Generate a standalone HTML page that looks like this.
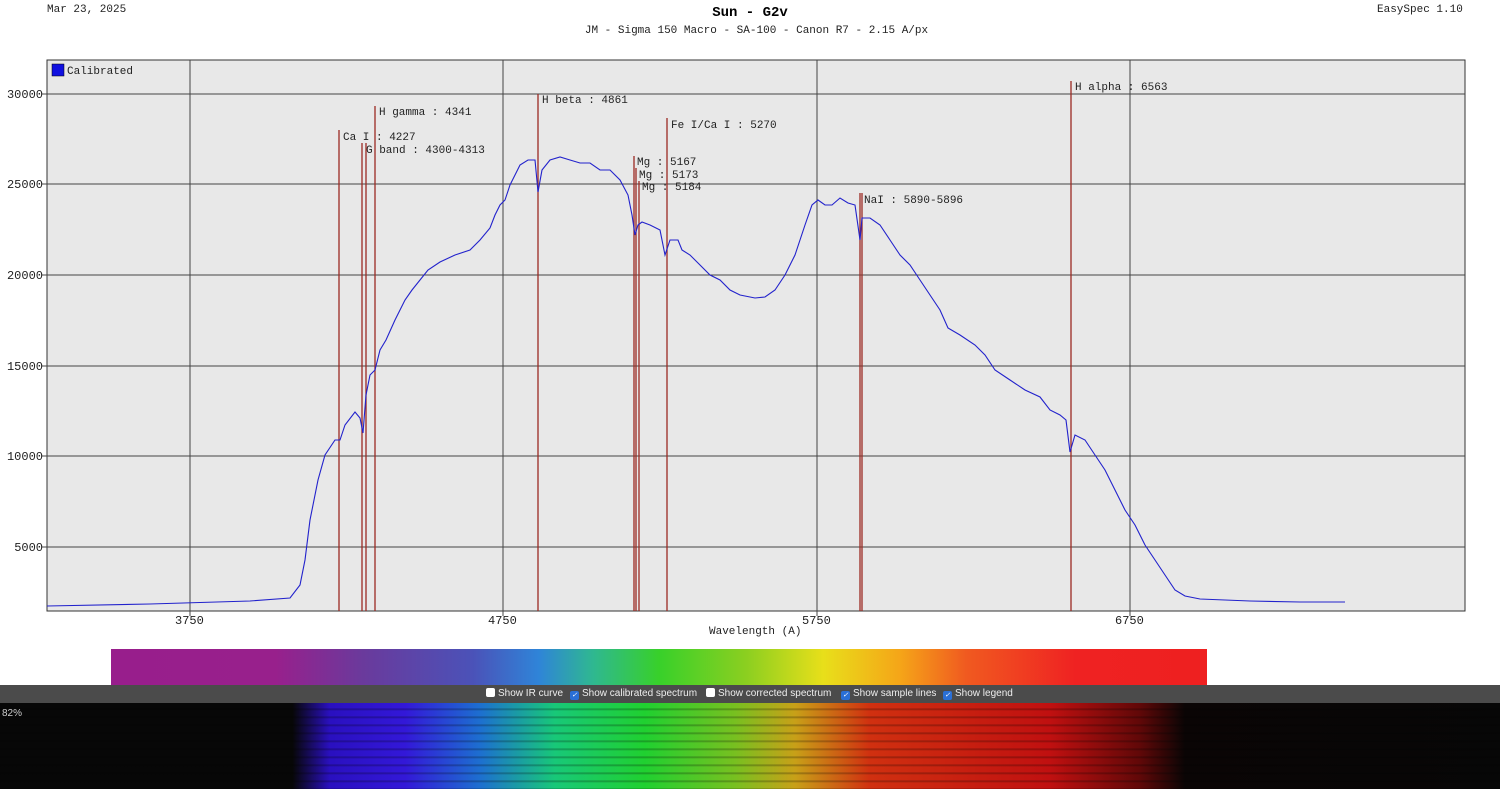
<!DOCTYPE html><html><head><style>
body{margin:0;width:1500px;height:789px;background:#fff;position:relative;overflow:hidden;font-family:"Liberation Mono",monospace}
.t{position:absolute;font-size:11px;color:#222}
.ax{position:absolute;font-size:12px;color:#222}
.cb{position:absolute;top:685px;left:0;width:1500px;height:18px;background:#4b4b4b;font-family:"Liberation Sans",sans-serif;font-size:10px;color:#eee}
.cb span{position:absolute;top:3px}
.bx{display:inline-block;width:9px;height:9px;background:#fff;border-radius:2px;vertical-align:-1px;margin-right:3px}
.bx.c{background:#2a6fd6;color:#fff;font-size:7px;line-height:9px;text-align:center}
</style></head><body>
<div class="t" style="left:47px;top:4px">Mar 23, 2025</div>
<div class="t" style="left:1377px;top:4px">EasySpec 1.10</div>
<div style="position:absolute;left:0;width:1500px;top:5px;text-align:center;font-weight:bold;font-size:14px">Sun - G2v</div>
<div class="t" style="left:0;width:1513px;top:25px;text-align:center">JM - Sigma 150 Macro - SA-100 - Canon R7 - 2.15 A/px</div>
<svg style="position:absolute;left:0;top:0" width="1500" height="640">
<rect x="47" y="60" width="1418" height="551" fill="#e8e8e8" stroke="#333"/>
<g stroke="#444" stroke-width="1">
<line x1="190" y1="60" x2="190" y2="616"/><line x1="503" y1="60" x2="503" y2="616"/><line x1="817" y1="60" x2="817" y2="616"/><line x1="1130" y1="60" x2="1130" y2="616"/>
<line x1="42" y1="94" x2="1465" y2="94"/><line x1="42" y1="184" x2="1465" y2="184"/><line x1="42" y1="275" x2="1465" y2="275"/><line x1="42" y1="366" x2="1465" y2="366"/><line x1="42" y1="456" x2="1465" y2="456"/><line x1="42" y1="547" x2="1465" y2="547"/>
</g>
<g stroke="#9b2a22" stroke-width="1.3">
<line x1="339" y1="130" x2="339" y2="611"/><line x1="362" y1="143" x2="362" y2="611"/><line x1="366" y1="143" x2="366" y2="611"/><line x1="375" y1="106" x2="375" y2="611"/><line x1="538" y1="94" x2="538" y2="611"/><line x1="634" y1="156" x2="634" y2="611"/><line x1="636" y1="168" x2="636" y2="611"/><line x1="639" y1="181" x2="639" y2="611"/><line x1="667" y1="118" x2="667" y2="611"/><line x1="860" y1="193" x2="860" y2="611"/><line x1="862" y1="193" x2="862" y2="611"/><line x1="1071" y1="81" x2="1071" y2="611"/>
</g>
<polyline fill="none" stroke="#2222cc" stroke-width="1.1" points="47,606 150,604 250,601 290,598 300,585 305,560 310,520 318,480 325,455 335,440 340,440 345,425 355,412 360,418 363,433 366,395 370,375 375,370 380,350 386,340 395,320 405,300 412,290 420,280 428,270 440,262 455,255 470,250 480,240 490,228 495,215 500,205 505,200 510,185 515,175 520,165 528,160 535,160 538,192 542,170 550,160 560,157 570,160 580,163 590,163 600,170 610,170 620,180 628,195 632,215 635,235 638,225 642,222 650,225 660,230 665,255 670,240 678,240 682,250 690,255 700,265 710,275 720,280 730,290 740,295 755,298 765,297 775,290 785,275 795,255 800,240 805,225 812,205 818,200 825,205 832,205 840,198 848,203 855,205 860,240 862,218 870,218 880,225 890,240 900,255 910,265 920,280 930,295 940,310 948,328 960,335 975,345 985,355 995,370 1010,380 1025,390 1040,397 1050,410 1060,415 1066,420 1070,452 1075,435 1085,440 1095,455 1105,470 1115,490 1125,510 1135,525 1145,545 1155,560 1165,575 1175,590 1185,596 1200,599 1250,601 1300,602 1345,602"/>
<rect x="52" y="64" width="12" height="12" fill="#1010e0" stroke="#000" stroke-width=".5"/>
</svg>
<div class="t" style="left:67px;top:66px">Calibrated</div>
<div class="t" style="left:343px;top:132px">Ca I : 4227</div>
<div class="t" style="left:366px;top:145px">G band : 4300-4313</div>
<div class="t" style="left:379px;top:107px">H gamma : 4341</div>
<div class="t" style="left:542px;top:95px">H beta : 4861</div>
<div class="t" style="left:637px;top:157px">Mg : 5167</div>
<div class="t" style="left:639px;top:170px">Mg : 5173</div>
<div class="t" style="left:642px;top:182px">Mg : 5184</div>
<div class="t" style="left:671px;top:120px">Fe I/Ca I : 5270</div>
<div class="t" style="left:864px;top:195px">NaI : 5890-5896</div>
<div class="t" style="left:1075px;top:82px">H alpha : 6563</div>
<div class="ax" style="right:1457px;top:88px">30000</div>
<div class="ax" style="right:1457px;top:178px">25000</div>
<div class="ax" style="right:1457px;top:269px">20000</div>
<div class="ax" style="right:1457px;top:360px">15000</div>
<div class="ax" style="right:1457px;top:450px">10000</div>
<div class="ax" style="right:1457px;top:541px">5000</div>
<div class="ax" style="left:175px;top:614px">3750</div>
<div class="ax" style="left:488px;top:614px">4750</div>
<div class="ax" style="left:802px;top:614px">5750</div>
<div class="ax" style="left:1115px;top:614px">6750</div>
<div class="t" style="left:709px;top:626px">Wavelength (A)</div>
<div style="position:absolute;left:111px;top:649px;width:1096px;height:36px;background:linear-gradient(90deg,#981e8c 0%,#98208c 15%,#6a3a9c 23%,#4b52b8 33%,#2f84d8 39%,#2fb890 44%,#38d02a 50%,#8ccf20 58%,#e8df1a 65%,#f5a518 72%,#f05a20 78%,#ef2222 88%,#ee2020 100%)"></div>
<div class="cb">
<span style="left:486px"><i class="bx"></i>Show IR curve</span>
<span style="left:570px"><i class="bx c">✓</i>Show calibrated spectrum</span>
<span style="left:706px"><i class="bx"></i>Show corrected spectrum</span>
<span style="left:841px"><i class="bx c">✓</i>Show sample lines</span>
<span style="left:943px"><i class="bx c">✓</i>Show legend</span>
</div>
<div style="position:absolute;left:0;top:703px;width:1500px;height:86px;background:linear-gradient(90deg,#070707 0%,#070707 19.5%,#2a10c0 22%,#3318d8 27%,#1d6fd0 32%,#18c878 37%,#20d030 43%,#78c020 49%,#c8a018 53%,#d03010 58%,#c01010 70%,#600808 76%,#0a0505 79%,#070707 100%)"></div>
<div style="position:absolute;left:0;top:703px;width:1500px;height:86px;background:repeating-linear-gradient(180deg,rgba(0,0,0,0) 0px,rgba(0,0,0,0) 5px,rgba(0,0,0,.3) 6px,rgba(0,0,0,0) 8px)"></div>
<div style="position:absolute;left:2px;top:708px;font-family:'Liberation Sans',sans-serif;font-size:10px;color:#ccc">82%</div>
</body></html>
